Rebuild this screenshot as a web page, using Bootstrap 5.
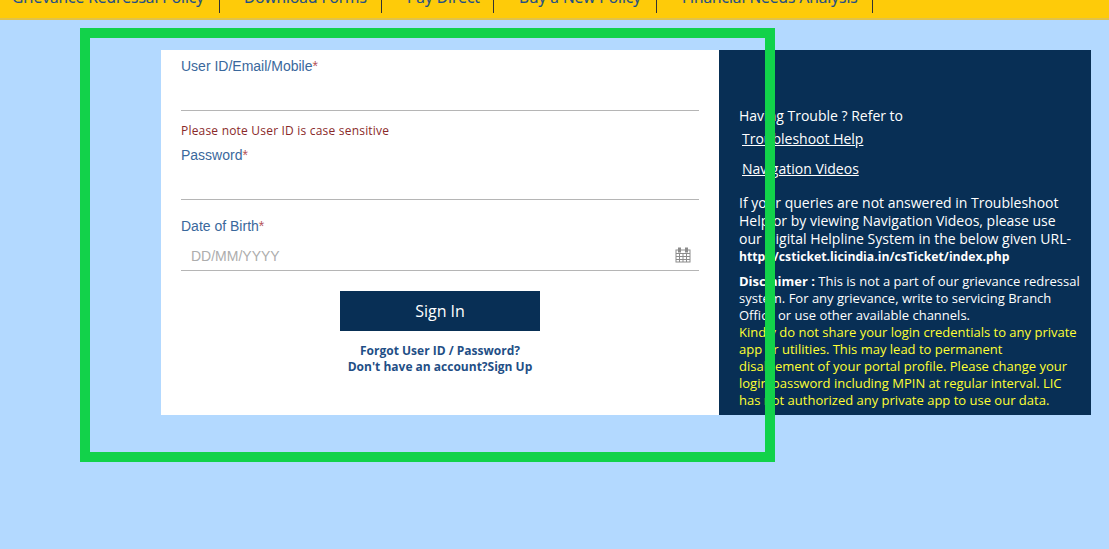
<!DOCTYPE html>
<html lang="en">
<head>
<meta charset="utf-8">
<title>Customer Login</title>
<link href="https://cdn.jsdelivr.net/npm/bootstrap@5.3.0/dist/css/bootstrap.min.css" rel="stylesheet">
<style>
html,body{height:100%;}
body{background:#b3d9ff;overflow:hidden;font-family:"Open Sans",sans-serif;position:relative;}
.topbar{height:20px;background:#fecb09;box-shadow:inset 0 -2px 0 #e0c24c;overflow:hidden;align-items:flex-end;}
.topitems{height:13px;margin-bottom:7px;}
.topitem{font:15.5px/18px "Open Sans",sans-serif;color:#1f4f86;border-right:1px solid #333;height:13px;display:flex;align-items:flex-end;white-space:nowrap;text-decoration:none;}
.topitem span{display:block;margin-bottom:7px;-webkit-text-stroke:.2px #1f4f86;}
.i1{width:220px;padding-left:12px;}
.i2{width:162px;padding-left:24px;}
.i3{width:112px;padding-left:25px;}
.i4{width:163px;padding-left:25px;}
.i5{width:216px;padding-left:25px;}
.loginwrap{margin:30px 0 0 161px;width:930px;height:365px;}
.formpane{width:558px;background:#fff;padding:8px 20px 0;}
.helppane{width:372px;background:#082f55;padding:57px 11px 0 20px;color:#fff;font-size:14px;line-height:18px;}
.fieldlabel{font:14px/16px "Liberation Sans",sans-serif;color:#3a689c;margin:0;}
.fieldlabel em{font-style:normal;color:#b5545a;}
.lineinput{border-bottom:1px solid #b5b5b5;position:relative;}
.l1,.l2{height:37px;}
.l3{height:29px;margin-top:8px;font:14px/28px "Liberation Sans",sans-serif;color:#adadad;padding-left:10px;}
.calicon{position:absolute;right:8px;top:5px;}
.casenote{font-size:12px;line-height:14px;color:#8a2a2a;margin:13px 0 9px;letter-spacing:.2px;}
.dobgap{margin-top:18px;}
.signbtn{display:block;width:200px;height:40px;margin:20px auto 0;background:#082f55;color:#fff;border:0;border-radius:0;font-size:16px;line-height:40px;padding:0;}
.signbtn:hover{background:#082f55;color:#fff;}
.loginlinks{margin-top:12px;text-align:center;font-size:12px;line-height:16px;font-weight:700;color:#1f4f86;}
.helplink{display:block;color:#fff;text-decoration:underline;padding-left:3px;line-height:20px;}
.helpone{margin-top:4px;}
.helptwo{margin-top:10px;}
.helpbody{margin-top:15px;}
.urltext{font-size:12.2px;font-weight:700;line-height:18px;}
.disclaimer{font-size:13px;line-height:17px;margin:7px 0 0;}
.warnline{color:#ffff33;}
.greenbox{position:absolute;left:80px;top:28px;width:695px;height:434px;border:10px solid #12d24a;pointer-events:none;}
</style>
</head>
<body>
<nav class="topbar d-flex">
  <div class="topitems d-flex">
    <a class="topitem i1" href="#"><span>Grievance Redressal Policy</span></a>
    <a class="topitem i2" href="#"><span>Download Forms</span></a>
    <a class="topitem i3" href="#"><span>Pay Direct</span></a>
    <a class="topitem i4" href="#"><span>Buy a New Policy</span></a>
    <a class="topitem i5" href="#"><span>Financial Needs Analysis</span></a>
  </div>
</nav>
<main class="loginwrap d-flex">
  <form class="formpane">
    <label class="fieldlabel d-block">User ID/Email/Mobile<em>*</em></label>
    <div class="lineinput l1"></div>
    <p class="casenote">Please note User ID is case sensitive</p>
    <label class="fieldlabel d-block">Password<em>*</em></label>
    <div class="lineinput l2"></div>
    <label class="fieldlabel d-block dobgap">Date of Birth<em>*</em></label>
    <div class="lineinput l3">DD/MM/YYYY
      <svg class="calicon" width="16" height="16" viewBox="0 0 16 16" fill="none" stroke="#8c8c8c" stroke-width="1">
        <rect x="1" y="3" width="14" height="12" fill="#fff"/>
        <path d="M1 6.5h14M1 9.5h14M1 12.5h14M4.500 6.500v8.500M8 6.500v8.500M11.500 6.500v8.500"/>
        <rect x="3.500" y="1" width="2" height="4" fill="#8c8c8c"/>
        <rect x="10.500" y="1" width="2" height="4" fill="#8c8c8c"/>
      </svg>
    </div>
    <button type="button" class="btn signbtn">Sign In</button>
    <div class="loginlinks">Forgot User ID / Password?<br>Don't have an account?Sign Up</div>
  </form>
  <aside class="helppane">
    <div>Having Trouble ? Refer to</div>
    <a class="helplink helpone" href="#">Troubleshoot Help</a>
    <a class="helplink helptwo" href="#">Navigation Videos</a>
    <div class="helpbody">If your queries are not answered in Troubleshoot Help or by viewing Navigation Videos, please use our Digital Helpline System in the below given URL-</div>
    <div class="urltext">http://csticket.licindia.in/csTicket/index.php</div>
    <p class="disclaimer"><b>Disclaimer :</b> This is not a part of our grievance redressal system. For any grievance, write to servicing Branch Office or use other available channels.<br>
    <span class="warnline">Kindly do not share your login credentials to any private app or utilities. This may lead to permanent<br>disablement of your portal profile. Please change your login password including MPIN at regular interval. LIC has not authorized any private app to use our data.</span></p>
  </aside>
</main>
<div class="greenbox"></div>
<script src="https://cdn.jsdelivr.net/npm/bootstrap@5.3.0/dist/js/bootstrap.bundle.min.js"></script>
</body>
</html>
